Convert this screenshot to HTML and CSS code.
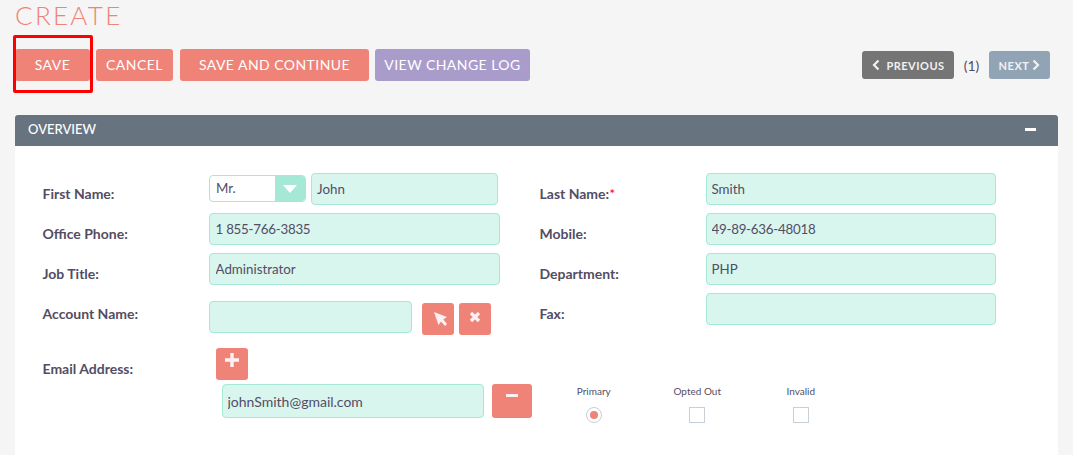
FILE: index.html
```html
<!DOCTYPE html>
<html lang="en">
<head>
<meta charset="utf-8">
<title>Create</title>
<link rel="stylesheet" href="styles.css">
</head>
<body>
<div class="page">
  <h1 class="title">CREATE</h1>
  <div class="actions">
    <div class="action-buttons">
      <div class="save-wrap">
        <button class="btn btn-save">SAVE</button>
        <span class="highlight"></span>
      </div>
      <button class="btn btn-cancel">CANCEL</button>
      <button class="btn btn-continue">SAVE AND CONTINUE</button>
      <button class="btn btn-log">VIEW CHANGE LOG</button>
    </div>
    <div class="pager">
      <button class="pager-btn pager-prev"><svg class="chev" viewBox="0 0 8 12"><path d="M6.500 1.500 2 6l4.500 4.500" fill="none" stroke="currentColor" stroke-width="2.200"/></svg>PREVIOUS</button>
      <span class="pager-count">(1)</span>
      <button class="pager-btn pager-next">NEXT<svg class="chev" viewBox="0 0 8 12"><path d="M1.500 1.500 6 6l-4.500 4.500" fill="none" stroke="currentColor" stroke-width="2.200"/></svg></button>
    </div>
  </div>

  <section class="panel">
    <header class="panel-head">
      <span class="panel-title">OVERVIEW</span>
      <span class="collapse"></span>
    </header>
    <div class="form">
      <label class="lbl">First Name:</label>
      <div class="name-cell">
        <div class="select"><span class="select-val">Mr.</span><span class="select-arrow"><span class="tri"></span></span></div>
        <input class="field field-first" value="John">
      </div>
      <label class="lbl">Last Name:<span class="req">*</span></label>
      <div><input class="field field-right" value="Smith"></div>

      <label class="lbl">Office Phone:</label>
      <div><input class="field field-left field-num" value="1 855-766-3835"></div>
      <label class="lbl">Mobile:</label>
      <div><input class="field field-right field-num" value="49-89-636-48018"></div>

      <label class="lbl">Job Title:</label>
      <div><input class="field field-left" value="Administrator"></div>
      <label class="lbl">Department:</label>
      <div><input class="field field-right" value="PHP"></div>

      <label class="lbl">Account Name:</label>
      <div class="account-cell">
        <input class="field field-account" value="">
        <button class="icon-btn icon-select"><svg viewBox="0 0 13 14" class="ico"><path d="M0 0 13 5 9.300 7.600 13 12 11 14 7 9.600 4.500 13Z" fill="#fbf1f3"/></svg></button>
        <button class="icon-btn"><svg viewBox="0 0 12 12" class="ico-x"><path d="M2 2l8 8M10 2l-8 8" stroke="#fbf1f3" stroke-width="3.200" fill="none"/></svg></button>
      </div>
      <label class="lbl">Fax:</label>
      <div><input class="field field-right" value=""></div>

      <label class="lbl">Email Address:</label>
      <div class="email-cell">
        <button class="icon-btn icon-add"><svg viewBox="0 0 14 14" class="ico-plus"><path d="M7 0v14M0 7h14" stroke="#fbf1f3" stroke-width="3.400" fill="none"/></svg></button>
        <div class="email-row">
          <input class="field field-email" value="johnSmith@gmail.com">
          <button class="icon-btn icon-remove"><span class="minus"></span></button>
          <div class="opt"><span class="opt-lbl">Primary</span><span class="radio"><span class="radio-dot"></span></span></div>
          <div class="opt"><span class="opt-lbl">Opted Out</span><span class="check"></span></div>
          <div class="opt"><span class="opt-lbl">Invalid</span><span class="check"></span></div>
        </div>
      </div>
    </div>
  </section>
</div>
</body>
</html>
```
FILE: styles.css
```css
* { box-sizing: border-box; }
html, body { margin: 0; height: 100%; overflow: hidden; }
body { background: #f5f5f5; font-family: Lato, "Open Sans", sans-serif; color: #534d64; }
.page { height: 455px; padding: 0 15px; overflow: hidden; }
.title { margin: 0; height: 49px; font-size: 26px; line-height: 30px; font-weight: 300; letter-spacing: 2.300px; color: #f08377; }
.actions { display: flex; justify-content: space-between; align-items: center; height: 32px; margin-bottom: 34px; margin-right: -7px; padding-right: 15px; }
.action-buttons { display: flex; }
.save-wrap { position: relative; margin-right: 6px; }
.btn { display: block; height: 32px; border: 0; border-radius: 3px; padding: 0 0 2px; color: #fff; font-family: Lato, sans-serif; font-size: 14px; font-weight: 400; letter-spacing: 0.450px; background: #f08377; }
.btn-save { width: 75px; }
.btn-cancel { width: 77px; margin-right: 7px; }
.btn-continue { width: 189px; margin-right: 6px; }
.btn-log { width: 155px; background: #a99ccb; }
.highlight { position: absolute; left: -2px; top: -14px; width: 80px; height: 58px; border: 3px solid #f00; border-radius: 2px; }
.pager { display: flex; align-items: center; }
.pager-btn { display: flex; align-items: center; justify-content: center; gap: 6px; height: 28px; border: 0; border-radius: 3px; padding: 0; color: #f1f1f1; font-family: Lato, sans-serif; font-size: 11px; font-weight: 700; letter-spacing: 0.500px; }
.pager-prev { width: 92px; background: #757575; padding-left: 1px; }
.pager-next { width: 61px; background: #90a4b6; gap: 3px; }
.pager-count { width: 35px; text-align: center; font-size: 14px; color: #534d64; }
.chev { width: 8px; height: 12px; }
.panel { background: #fff; height: 340px; }
.panel-head { display: flex; justify-content: space-between; align-items: center; height: 31px; padding: 0 22px 4px 13px; background: #677480; border-radius: 3px 3px 0 0; }
.panel-title { color: #fff; font-size: 13px; font-weight: 500; }
.collapse { width: 11px; height: 3px; margin-top: 1px; background: #fff; }
.form { display: grid; grid-template-columns: 166px 331px 166px 1fr; grid-template-rows: 40px 40px 40px 55px auto; padding: 27px 0 0 27.500px; }
.lbl { padding-top: 13px; line-height: 16px; font-size: 14px; font-weight: 700; color: #534d64; }
.req { color: #f00; font-weight: 400; }
.field { display: block; height: 32px; padding: 0 5px 1px; border: 1px solid #a5e8d6; border-radius: 4px; background: #d8f5ee; color: #534d64; font-family: Lato, sans-serif; font-size: 13.330px; outline: 0; }
.field-num { letter-spacing: -0.250px; }
.field-left { width: 291px; padding-left: 6px; }
.field-right { width: 290px; }
.name-cell { display: flex; gap: 5px; padding-left: 0.500px; }
.field-first { width: 187px; }
.select { display: flex; width: 97px; height: 27px; margin-top: 2px; background: #fff; border: 1px solid #a5e8d6; border-radius: 4px; overflow: hidden; }
.select-val { flex: 1; padding-left: 6px; font-size: 13.330px; line-height: 24px; }
.select-arrow { display: flex; align-items: center; justify-content: center; width: 30px; background: #a5e8d6; }
.tri { width: 0; height: 0; border-left: 7px solid transparent; border-right: 7px solid transparent; border-top: 8px solid #fff; }
.account-cell { display: flex; align-items: flex-start; padding-top: 8px; }
.field-account { width: 203px; margin-right: 10px; }
.icon-btn { display: flex; align-items: center; justify-content: center; width: 32px; height: 32px; margin-top: 2px; padding: 0; border: 0; border-radius: 3px; background: #f08377; }
.icon-btn + .icon-btn { margin-left: 5px; }
.ico { width: 13px; height: 14px; margin-left: 5px; }
.ico-x { width: 12px; height: 12px; margin-bottom: 5px; }
.ico-plus { width: 14px; height: 14px; margin-bottom: 9px; }
.email-cell { grid-column: 2 / 5; }
.icon-add { margin: 0 0 4px 7px; }
.email-row { display: flex; align-items: flex-start; margin-left: 13px; }
.field-email { width: 262px; height: 34px; font-size: 14px; margin-right: 8px; padding-bottom: 0; }
.icon-remove { width: 40px; height: 34px; margin: 0 10.500px 0 0; align-items: flex-start; padding-top: 10px; }
.minus { width: 12px; height: 3px; background: #fbf1f3; }
.opt { display: flex; flex-direction: column; align-items: center; width: 103.500px; margin-top: -1px; }
.opt-lbl { font-size: 10px; line-height: 16px; margin-bottom: 8px; color: #534d64; }
.check { width: 16px; height: 16px; background: #fff; border: 1px solid #c5d0d8; }
.radio { display: flex; align-items: center; justify-content: center; width: 16px; height: 16px; background: #fff; border: 1px solid #c5d0d8; border-radius: 50%; }
.radio-dot { width: 8px; height: 8px; border-radius: 50%; background: #f08377; }
```
